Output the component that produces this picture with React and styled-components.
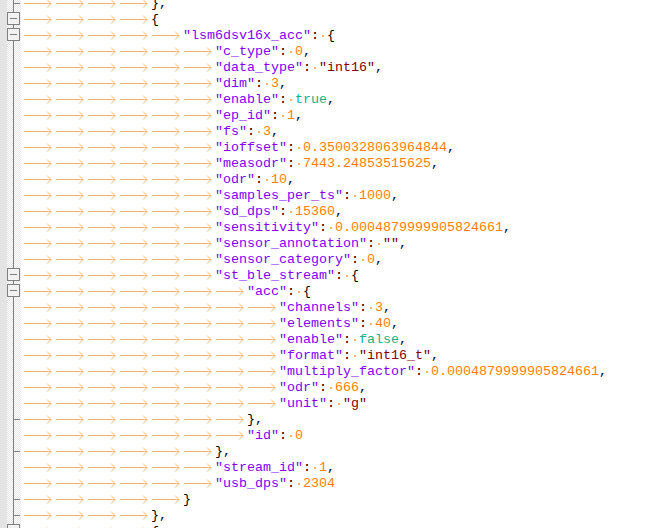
import React from 'react';
import styled, { createGlobalStyle } from 'styled-components';

const Global = createGlobalStyle`
  html, body {
    margin: 0;
    padding: 0;
    background: #ffffff;
    overflow: hidden;
  }
`;

const Editor = styled.div`
  height: 528px;
  overflow: hidden;
  background: #ffffff;
  font-family: "Liberation Mono", "Courier New", monospace;
  font-size: 13.333px;
`;

const Lines = styled.div`
  margin-top: -5px;
  display: flex;
  flex-direction: column;
`;

const Row = styled.div`
  display: flex;
  height: 16px;
  line-height: 16px;
  white-space: pre;
`;

const Gutter = styled.div`
  flex: 0 0 21px;
  display: flex;
`;

const MarginBar = styled.div`
  width: 7px;
  background: #e4e4e4;
`;

const FoldArea = styled.div`
  position: relative;
  width: 14px;
  background: repeating-conic-gradient(#e6e6e6 0 25%, #ffffff 0 50%) 0 0 / 2px 2px;

  &::before {
    content: "";
    position: absolute;
    left: 6px;
    top: 0;
    bottom: 0;
    width: 1px;
    background: #808080;
  }

  &::after {
    content: "";
    display: ${p => (p.$kind === 'end' ? 'block' : 'none')};
    position: absolute;
    left: 6px;
    top: 8px;
    width: 7px;
    height: 1px;
    background: #808080;
  }
`;

const FoldBox = styled.div`
  position: absolute;
  left: 0;
  top: 1px;
  width: 11px;
  height: 11px;
  border: 1px solid #808080;
  background: #f2f2f2;
  z-index: 1;

  &::after {
    content: "";
    position: absolute;
    left: 2px;
    right: 2px;
    top: 5px;
    height: 1px;
    background: #808080;
  }
`;

const Code = styled.div`
  padding-left: 2px;
  display: flex;
  align-items: center;
`;

const Tab = styled.svg`
  width: 32px;
  height: 16px;
  flex: 0 0 32px;
`;

const Space = styled.span`
  position: relative;
  display: inline-block;
  width: 1ch;
  height: 16px;

  &::after {
    content: "";
    position: absolute;
    left: calc(50% - 1px);
    top: 8px;
    width: 2px;
    height: 2px;
    background: #f7b36c;
  }
`;

const colors = {
  key: '#8000ff',
  num: '#ff8000',
  str: '#800000',
  kw: '#18af8a',
  op: '#000000',
};

const Tok = styled.span`
  color: ${p => colors[p.$kind]};
  transform: translateY(1px);
`;

const TabArrow = () => (
  <Tab viewBox="0 0 32 16">
    <g stroke="#f5b46e" strokeWidth="1" fill="none" shapeRendering="crispEdges">
      <line x1="1" y1="8.5" x2="28" y2="8.5" />
      <path d="M24 4.5 L28 8.5 L24 12.5" shapeRendering="auto" />
    </g>
  </Tab>
);

const prop = (d, key, val, kind, comma = true, fold = 'line') => ({
  d,
  f: fold,
  t: [
    ['key', `"${key}"`],
    ['op', ':'],
    ['sp'],
    [kind, val],
    ...(comma ? [['op', ',']] : []),
  ],
});

const open = (d, key, fold = 'box') => ({
  d,
  f: fold,
  t: [['key', `"${key}"`], ['op', ':'], ['sp'], ['op', '{']],
});

const brace = (d, text, fold) => ({ d, f: fold, t: [['op', text]] });

const rows = [
  brace(4, '},', 'end'),
  brace(4, '{', 'box'),
  open(5, 'lsm6dsv16x_acc'),
  prop(6, 'c_type', '0', 'num'),
  prop(6, 'data_type', '"int16"', 'str'),
  prop(6, 'dim', '3', 'num'),
  prop(6, 'enable', 'true', 'kw'),
  prop(6, 'ep_id', '1', 'num'),
  prop(6, 'fs', '3', 'num'),
  prop(6, 'ioffset', '0.3500328063964844', 'num'),
  prop(6, 'measodr', '7443.24853515625', 'num'),
  prop(6, 'odr', '10', 'num'),
  prop(6, 'samples_per_ts', '1000', 'num'),
  prop(6, 'sd_dps', '15360', 'num'),
  prop(6, 'sensitivity', '0.0004879999905824661', 'num'),
  prop(6, 'sensor_annotation', '""', 'str'),
  prop(6, 'sensor_category', '0', 'num'),
  open(6, 'st_ble_stream'),
  open(7, 'acc'),
  prop(8, 'channels', '3', 'num'),
  prop(8, 'elements', '40', 'num'),
  prop(8, 'enable', 'false', 'kw'),
  prop(8, 'format', '"int16_t"', 'str'),
  prop(8, 'multiply_factor', '0.0004879999905824661', 'num'),
  prop(8, 'odr', '666', 'num'),
  prop(8, 'unit', '"g"', 'str', false),
  brace(7, '},', 'end'),
  prop(7, 'id', '0', 'num', false),
  brace(6, '},', 'end'),
  prop(6, 'stream_id', '1', 'num'),
  prop(6, 'usb_dps', '2304', 'num', false),
  brace(5, '}', 'end'),
  brace(4, '},', 'end'),
  brace(4, '{', 'box'),
];

const Line = ({ row }) => (
  <Row>
    <Gutter>
      <MarginBar />
      <FoldArea $kind={row.f}>{row.f === 'box' && <FoldBox />}</FoldArea>
    </Gutter>
    <Code>
      {Array.from({ length: row.d }, (_, i) => <TabArrow key={i} />)}
      {row.t.map(([kind, text], i) =>
        kind === 'sp' ? <Space key={i} /> : <Tok key={i} $kind={kind}>{text}</Tok>
      )}
    </Code>
  </Row>
);

const App = () => (
  <Editor>
    <Global />
    <Lines>
      {rows.map((row, i) => <Line key={i} row={row} />)}
    </Lines>
  </Editor>
);

export default App;
